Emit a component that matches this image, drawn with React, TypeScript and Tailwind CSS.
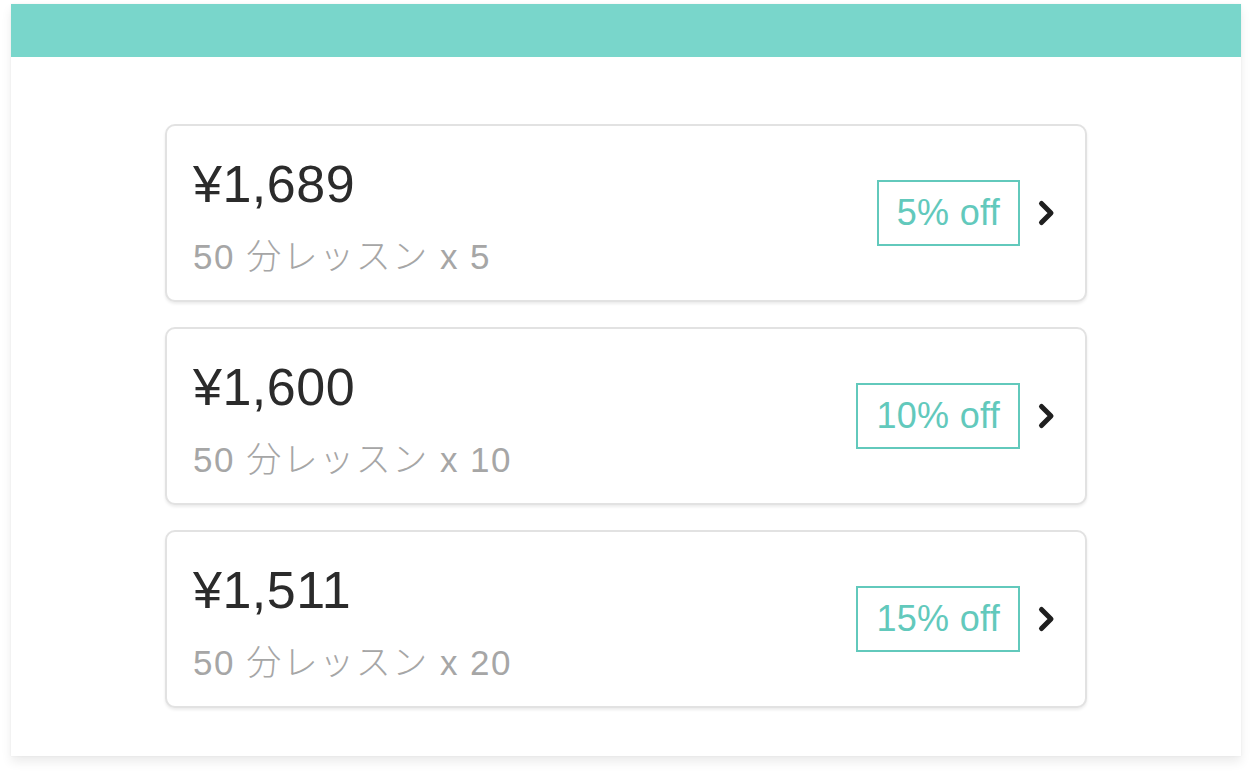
const PLANS = [
  { price: "¥1,689", count: 5, off: "5% off" },
  { price: "¥1,600", count: 10, off: "10% off" },
  { price: "¥1,511", count: 20, off: "15% off" },
];

function Chevron() {
  return (
    <svg width="20" height="28" viewBox="0 0 20 28" fill="none" aria-hidden>
      <path
        d="M4.5 4.5 L14 14 L4.5 23.5"
        stroke="#1f1f1f"
        strokeWidth="5"
        strokeLinecap="round"
        strokeLinejoin="round"
      />
    </svg>
  );
}

function PlanCard({ price, count, off }: { price: string; count: number; off: string }) {
  return (
    <button className="flex h-[178px] w-full items-center justify-between rounded-[10px] border-2 border-[#e2e2e2] bg-white pl-[26px] pr-[28px] pt-[6px] text-left shadow-[0_2px_3px_rgba(0,0,0,0.08)]">
      <div className="flex flex-col">
        <span className="text-[52px] leading-[52px] tracking-[0.5px] text-[#2b2b2b]">{price}</span>
        <span className="mt-[29px] text-[35px] font-light leading-[36px] tracking-[1.5px] text-[#a6a6a6]">
          50 分レッスン x {count}
        </span>
      </div>
      <div className="-mt-[6px] flex items-center gap-[17px]">
        <span className="flex h-[66px] items-center border-2 border-[#62c9bc] px-[18px] text-[36px] leading-none tracking-[0.3px] text-[#62c9bc]">
          {off}
        </span>
        <Chevron />
      </div>
    </button>
  );
}

export default function App() {
  return (
    <div
      className="min-h-[778px] bg-white px-[11px] pt-[4px]"
      style={{ fontFamily: '"Liberation Sans", "Noto Sans CJK JP", sans-serif' }}
    >
      <div className="bg-white pb-[48px] shadow-[0_6px_10px_rgba(0,0,0,0.08),0_0_2px_rgba(0,0,0,0.06)]">
        <div className="h-[53px] bg-[#79d6cb]" />
        <div className="mx-auto flex w-[922px] flex-col gap-[25px] pt-[67px]">
          {PLANS.map((p) => (
            <PlanCard key={p.count} {...p} />
          ))}
        </div>
      </div>
    </div>
  );
}
